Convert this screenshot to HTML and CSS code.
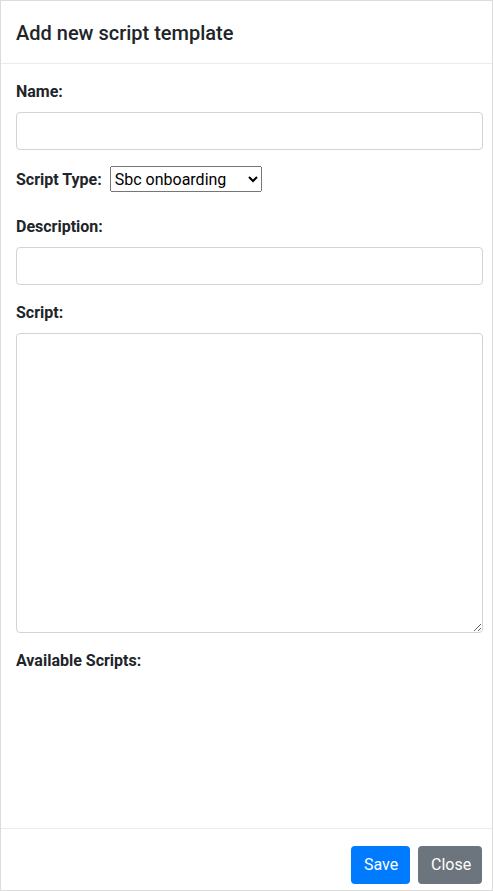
FILE: index.html
```html
<!DOCTYPE html>
<html lang="en">
<head>
  <meta charset="UTF-8" />
  <meta name="viewport" content="width=device-width, initial-scale=1.0"/>
  <title>Add new script template</title>
  <link rel="stylesheet" href="styles.css">
</head>
<body>
  <div class="modal-content">
    <header class="modal-header">
      <h5 class="modal-title">Add new script template</h5>
    </header>

    <form class="modal-body">
      <div class="form-group">
        <label for="name">Name:</label>
        <input id="name" class="form-control" type="text">
      </div>

      <div class="form-group inline-group">
        <label for="script-type">Script Type:</label>
        <select id="script-type" class="type-select">
          <option>Sbc onboarding</option>
          <option>Sbc offboarding</option>
        </select>
      </div>

      <div class="form-group">
        <label for="description">Description:</label>
        <input id="description" class="form-control" type="text">
      </div>

      <div class="form-group">
        <label for="script">Script:</label>
        <textarea id="script" class="form-control script-area"></textarea>
      </div>

      <div class="form-group">
        <label>Available Scripts:</label>
      </div>
    </form>

    <footer class="modal-footer">
      <button type="button" class="btn btn-primary">Save</button>
      <button type="button" class="btn btn-secondary">Close</button>
    </footer>
  </div>
</body>
</html>
```

FILE: styles.css
```css
* {
  box-sizing: border-box;
}

body {
  margin: 0;
  font-family: Roboto, 'Open Sans', sans-serif;
  font-size: 16px;
  line-height: 1.5;
  color: #212529;
  background: #fff;
}

.modal-content {
  display: flex;
  flex-direction: column;
  width: 493px;
  height: 891px;
  border: 1px solid #dcdcdc;
  background: #fff;
}

.modal-header {
  padding: 17px 15px 15px;
  border-bottom: 1px solid #e9ecef;
}

.modal-title {
  margin: 0;
  font-size: 20px;
  font-weight: 500;
  line-height: 30px;
}

.modal-body {
  flex: 1;
  padding: 16px 9px 0 15px;
}

.form-group {
  margin-bottom: 16px;
}

label {
  display: inline-block;
  margin-bottom: 8px;
  font-weight: 700;
}

.form-control {
  display: block;
  width: 100%;
  height: 38px;
  padding: 6px 12px;
  font: inherit;
  color: #495057;
  background: #fff;
  border: 1px solid #ced4da;
  border-radius: 4px;
}

.script-area {
  height: 300px;
  resize: vertical;
}

.inline-group {
  margin-bottom: 15px;
}

.inline-group label {
  margin-right: 4px;
}

.type-select {
  width: 152px;
  height: 26px;
  font-family: inherit;
  font-size: 16px;
  color: #000;
}

.modal-footer {
  display: flex;
  justify-content: flex-end;
  gap: 8px;
  padding: 17px 10px 6px 12px;
  border-top: 1px solid #e9ecef;
}

.btn {
  height: 38px;
  padding: 6px 12px;
  font: inherit;
  color: #fff;
  border: 1px solid transparent;
  border-radius: 4px;
}

.btn-primary {
  width: 59px;
  background: #007bff;
}

.btn-secondary {
  width: 64px;
  background: #6c757d;
}
```
